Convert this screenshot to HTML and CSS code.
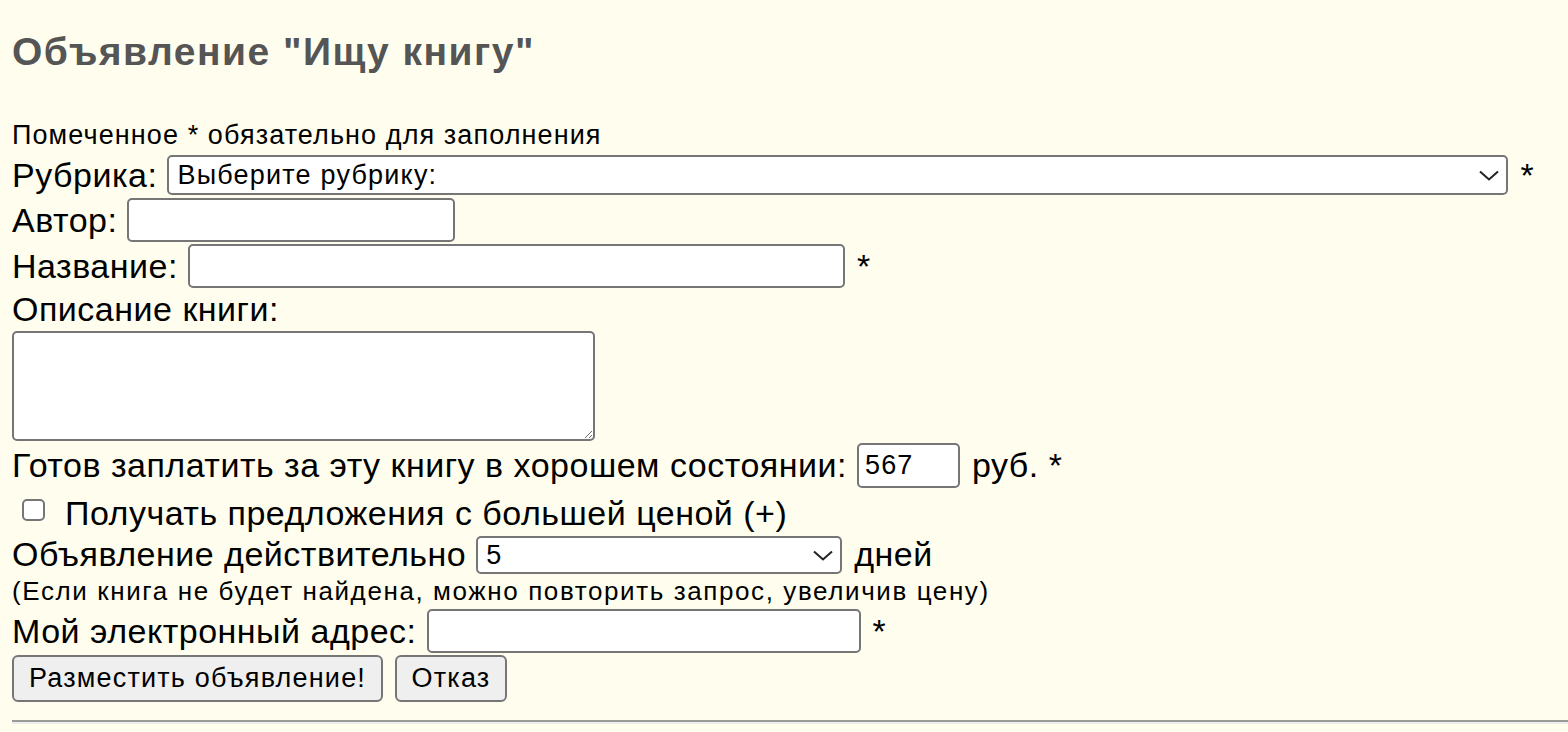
FILE: index.html
```html
<!DOCTYPE html>
<html lang="ru">

<head>
    <meta charset="UTF-8">
    <meta name="viewport" content="width=device-width, initial-scale=1.0">
    <title>Объявление "Ищу книгу"</title>
    <link rel="stylesheet" href="styles.css">
</head>

<body>
    <h2 class="title">Объявление "Ищу книгу"</h2>

    <form class="ad-form">
        <div class="note">Помеченное * обязательно для заполнения</div>

        <div class="row row-rubric">
            <label for="rubric">Рубрика:</label>
            <span class="select-wrap">
                <select id="rubric" class="rubric">
                    <option>Выберите рубрику:</option>
                </select>
                <svg class="arrow" width="20" height="11" viewBox="0 0 20 11">
                    <path d="M1 1.5 L10 9.5 L19 1.5" fill="none" stroke="#222" stroke-width="2"/>
                </svg>
            </span>
            <span class="req">*</span>
        </div>

        <div class="row row-author">
            <label for="author">Автор:</label>
            <input type="text" id="author" class="author">
        </div>

        <div class="row row-name">
            <label for="name">Название:</label>
            <input type="text" id="name" class="name">
            <span class="req">*</span>
        </div>

        <div class="row row-desc-label">
            <label for="desc">Описание книги:</label>
        </div>
        <textarea id="desc" class="desc"></textarea>

        <div class="row row-price">
            <label for="price">Готов заплатить за эту книгу в хорошем состоянии:</label>
            <input type="text" id="price" class="price" value="567">
            <span class="after">руб. *</span>
        </div>

        <div class="row row-check">
            <input type="checkbox" id="more" class="check">
            <label for="more">Получать предложения с большей ценой (+)</label>
        </div>

        <div class="row row-days">
            <label for="days">Объявление действительно</label>
            <span class="select-wrap">
                <select id="days" class="days">
                    <option>5</option>
                    <option>10</option>
                    <option>15</option>
                    <option>30</option>
                </select>
                <svg class="arrow" width="20" height="11" viewBox="0 0 20 11">
                    <path d="M1 1.5 L10 9.5 L19 1.5" fill="none" stroke="#222" stroke-width="2"/>
                </svg>
            </span>
            <span class="after">дней</span>
        </div>

        <div class="hint">(Если книга не будет найдена, можно повторить запрос, увеличив цену)</div>

        <div class="row row-email">
            <label for="email">Мой электронный адрес:</label>
            <input type="text" id="email" class="email">
            <span class="req">*</span>
        </div>

        <div class="row row-buttons">
            <button type="submit" class="btn btn-submit">Разместить объявление!</button>
            <button type="reset" class="btn btn-cancel">Отказ</button>
        </div>
    </form>

    <hr class="line">
</body>

</html>
```

FILE: styles.css
```css
body {
    margin: 0;
    padding: 0 0 0 12px;
    background-color: #fffeee;
    font-family: "Liberation Sans", Arial, sans-serif;
    font-size: 34px;
    letter-spacing: 0.5px;
    color: #000;
}

.title {
    margin: 30px 0 0;
    font-size: 39px;
    font-weight: bold;
    letter-spacing: 1.5px;
    color: #555;
}

.ad-form {
    display: flex;
    flex-direction: column;
    align-items: flex-start;
}

.note {
    margin-top: 46px;
    font-size: 27px;
    letter-spacing: 1.1px;
}

.row {
    display: flex;
    align-items: center;
    white-space: nowrap;
}

.row label {
    margin-right: 10px;
}

input[type="text"],
select,
textarea {
    box-sizing: border-box;
    border: 2px solid #767676;
    border-radius: 5px;
    background-color: #fff;
    font-family: "Liberation Sans", Arial, sans-serif;
    font-size: 27px;
    letter-spacing: 1.2px;
    color: #000;
    margin: 0;
}

input[type="text"] {
    height: 44px;
    padding: 2px 6px;
}

select {
    appearance: none;
    -webkit-appearance: none;
    padding: 0 36px 0 8px;
}

.select-wrap {
    position: relative;
    display: flex;
}

.select-wrap .arrow {
    position: absolute;
    right: 9px;
    top: 50%;
    margin-top: -5px;
    pointer-events: none;
}

.req {
    margin-left: 12px;
}

.after {
    margin-left: 12px;
}

.row-rubric {
    margin-top: 4px;
}

.rubric {
    width: 1341px;
    height: 40px;
}

.row-author {
    margin-top: 3px;
}

.author {
    width: 328px;
}

.row-name {
    margin-top: 2px;
}

.name {
    width: 657px;
}

.row-desc-label {
    margin-top: 2px;
}

.desc {
    width: 583px;
    height: 110px;
    margin-top: 2px;
    resize: both;
}

.row-price {
    margin-top: 2px;
}

.price {
    width: 103px;
    height: 45px !important;
}

.row-check {
    margin-top: 6px;
}

.check {
    appearance: none;
    -webkit-appearance: none;
    box-sizing: border-box;
    width: 23px;
    height: 22px;
    margin: 0 20px 8px 10px;
    border: 2px solid #767676;
    border-radius: 5px;
    background-color: #fff;
}

.row-days {
    margin-top: 2px;
}

.days {
    width: 366px;
    height: 38px;
}

.hint {
    margin-top: 2px;
    font-size: 26px;
    letter-spacing: 1.6px;
}

.row-email {
    margin-top: 2px;
}

.email {
    width: 434px;
}

.row-buttons {
    margin-top: 2px;
    gap: 12px;
}

.btn {
    box-sizing: border-box;
    height: 47px;
    padding: 0 10px;
    border: 2px solid #767676;
    border-radius: 6px;
    background-color: #efefef;
    font-family: "Liberation Sans", Arial, sans-serif;
    font-size: 27px;
    letter-spacing: 1.2px;
    color: #000;
}

.btn-submit {
    width: 371px;
}

.btn-cancel {
    width: 112px;
}

.line {
    margin: 18px 0 0;
    height: 0;
    border: 0;
    border-top: 2px solid #9a9a96;
    border-bottom: 2px solid #ececec;
}
```
